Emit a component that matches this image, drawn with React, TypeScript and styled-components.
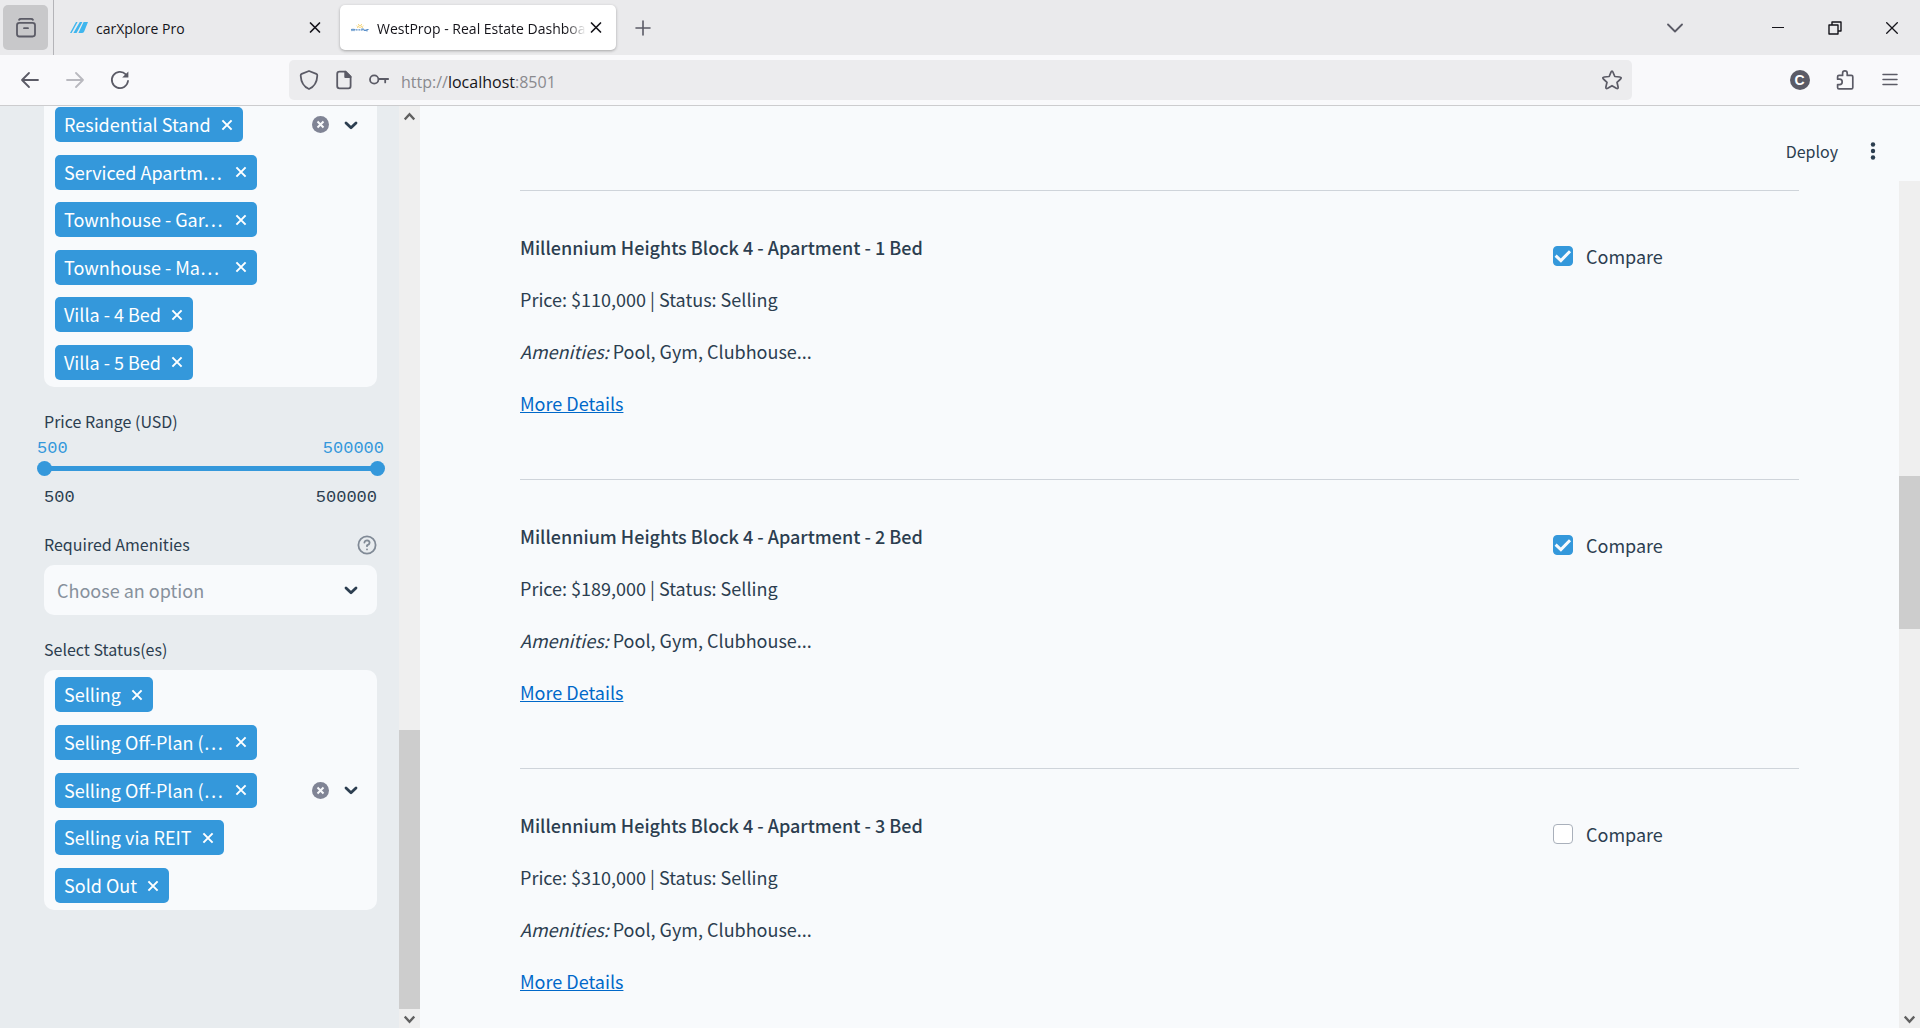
import React, { useState } from "react";
import styled, { createGlobalStyle, css } from "styled-components";

const sans = `"Noto Sans CJK SC", "Noto Sans", sans-serif`;
const chromeSans = `"Open Sans", "Noto Sans", sans-serif`;
const mono = `"Liberation Mono", monospace`;

const c = {
  ink: "#2c3e50",
  blue: "#3498db",
  link: "#0068c9",
  side: "#e8ecef",
  page: "#f8fafc",
  chrome: "#5b5b66",
};

const Global = createGlobalStyle`
  *, *::before, *::after { box-sizing: border-box; }
  body { margin: 0; font-family: ${sans}; color: ${c.ink}; overflow: hidden; }
  button { border: 0; padding: 0; background: none; color: inherit; font: inherit; cursor: pointer; }
  p { margin: 0; }
  svg { display: block; flex: none; }
`;

const Window = styled.div`
  display: flex;
  flex-direction: column;
  height: 100vh;
  background: ${c.page};
`;

/* ---------- browser frame ---------- */

const TabBar = styled.div`
  display: flex;
  align-items: center;
  flex: none;
  height: 55px;
  padding-left: 3px;
  background: #eaeaec;
  color: ${c.chrome};
`;

const IconButton = styled.button<{ $w?: number }>`
  display: flex;
  align-items: center;
  justify-content: center;
  flex: none;
  width: ${(p) => p.$w ?? 45}px;
  height: 45px;
`;

const ViewButton = styled(IconButton)`
  border-radius: 5px;
  background: #c8c8ca;
`;

const TabList = styled.div`
  display: flex;
  gap: 5px;
  align-items: center;
  height: 100%;
  margin-left: 5px;
  padding-left: 5px;
  border-left: 1px solid #b4b4b8;
`;

const Tab = styled.div<{ $active?: boolean }>`
  display: flex;
  align-items: center;
  width: 276px;
  height: 45px;
  padding: 0 10px 0 11px;
  border-radius: 5px;
  color: #15141a;
  ${(p) =>
    p.$active &&
    css`
      background: #fff;
      box-shadow: 0 1px 3px rgba(0, 0, 0, 0.3);
    `}
`;

const TabTitle = styled.span<{ $fade?: boolean }>`
  flex: 1;
  min-width: 0;
  margin-left: 8px;
  padding-top: 2px;
  overflow: hidden;
  white-space: nowrap;
  font: 14px/24px ${chromeSans};
  ${(p) =>
    p.$fade &&
    css`
      mask-image: linear-gradient(to left, transparent, #000 20px);
    `}
`;

const TabClose = styled.button`
  display: flex;
  align-items: center;
  justify-content: center;
  width: 20px;
  height: 30px;
`;

const WindowButtons = styled.div`
  display: flex;
  margin-left: auto;
  color: #15141a;
`;

const ListTabs = styled(IconButton)`
  margin-right: 52px;
  color: ${c.chrome};
`;

const NavBar = styled.div`
  display: flex;
  align-items: center;
  flex: none;
  height: 51px;
  padding: 0 8px 0 7px;
  background: #f9f9fb;
  border-bottom: 1px solid #ccccce;
  color: ${c.chrome};
`;

const AddressBar = styled.div`
  display: flex;
  align-items: center;
  flex: 1;
  height: 40px;
  margin: 0 145px 0 147px;
  padding: 0 3px 0 2px;
  border-radius: 5px;
  background: #ececee;
`;

const AddressIcon = styled.button`
  display: flex;
  align-items: center;
  justify-content: center;
  width: 35px;
  height: 35px;
`;

const Address = styled.div`
  display: flex;
  flex: 1;
  padding: 3px 0 0 5px;
  font: 16px/24px ${chromeSans};
  color: #8a8a8e;
  b {
    font-weight: 400;
    color: #15141a;
  }
`;

const Badge = styled.span`
  width: 20px;
  height: 20px;
  border-radius: 50%;
  background: ${c.chrome};
  color: #fff;
  text-align: center;
  font: 700 14px/20px "Liberation Sans", sans-serif;
`;

const Body = styled.div`
  display: flex;
  flex: 1;
  min-height: 0;
`;

/* ---------- scrollbars ---------- */

const ScrollTrack = styled.div`
  display: flex;
  flex-direction: column;
  justify-content: space-between;
  flex: none;
  width: 21px;
  background: #efefef;
  color: #606060;
`;

const ScrollArrow = styled.button`
  display: flex;
  align-items: center;
  justify-content: center;
  flex: none;
  height: 19px;
  padding-top: 2px;
`;

const ScrollGap = styled.div<{ $grow: number }>`
  flex: ${(p) => p.$grow} 0 0;
`;

const ScrollThumb = styled(ScrollGap)`
  background: #cdcdcd;
`;

/* ---------- sidebar ---------- */

const Sidebar = styled.aside`
  display: flex;
  flex: none;
  width: 420px;
  background: ${c.side};
`;

const Filters = styled.div`
  display: flex;
  flex-direction: column;
  gap: 20px;
  flex: 1;
  min-width: 0;
  padding: 0 22px 0 44px;
`;

const Field = styled.div`
  display: flex;
  flex-direction: column;
`;

const LabelRow = styled.div`
  display: flex;
  align-items: flex-start;
  justify-content: space-between;
  height: 30px;
  font-size: 16px;
  line-height: 28px;
`;

const HelpButton = styled.button`
  display: flex;
  align-items: center;
  height: 30px;
  color: #808a96;
`;

const MultiBox = styled.div<{ $open?: boolean; $height: number }>`
  display: flex;
  justify-content: space-between;
  align-items: ${(p) => (p.$open ? "flex-start" : "center")};
  height: ${(p) => p.$height}px;
  margin-top: ${(p) => (p.$open ? 0 : 5)}px;
  padding: ${(p) => (p.$open ? 1 : 7)}px 18px 7px 11px;
  border-radius: ${(p) => (p.$open ? "0 0 10px 10px" : "10px")};
  background: ${c.page};
`;

const TagList = styled.div`
  display: flex;
  flex-direction: column;
  align-items: flex-start;
  justify-content: space-between;
  height: 100%;
`;

const TagBox = styled.span<{ $full?: boolean }>`
  display: flex;
  align-items: center;
  justify-content: space-between;
  gap: 10px;
  width: ${(p) => (p.$full ? "202px" : "auto")};
  height: 35px;
  padding: 0 10px 0 9px;
  border-radius: 5px;
  background: ${c.blue};
  color: #fff;
  font-size: 18px;
  line-height: 35px;
  white-space: nowrap;
`;

const BoxActions = styled.div`
  display: flex;
  align-items: center;
  gap: 14px;
  height: 35px;
`;

const SelectWrap = styled.div`
  display: grid;
  align-items: center;
  margin-top: 5px;
  > * {
    grid-area: 1 / 1;
  }
  > svg {
    justify-self: end;
    margin-right: 18px;
    pointer-events: none;
  }
`;

const Select = styled.select`
  appearance: none;
  width: 100%;
  height: 50px;
  padding: 0 40px 0 13px;
  border: 0;
  border-radius: 10px;
  background: ${c.page};
  color: #87919c;
  font: 18px/26px ${sans};
`;

const RangeValues = styled.div<{ $active?: boolean }>`
  display: flex;
  justify-content: space-between;
  margin: ${(p) => (p.$active ? "0 -7px" : "9px 0 1px")};
  color: ${(p) => (p.$active ? c.blue : c.ink)};
  font: 17px/23px ${mono};
`;

const RangeWrap = styled.div`
  display: grid;
  align-items: center;
  height: 17px;
  > * {
    grid-area: 1 / 1;
  }
`;

const RangeTrack = styled.div`
  height: 5px;
  background: ${c.blue};
`;

const RangeInput = styled.input`
  appearance: none;
  height: 15px;
  margin: 0 -8px 0 -7px;
  background: transparent;
  pointer-events: none;
  &::-webkit-slider-thumb {
    appearance: none;
    width: 15px;
    height: 15px;
    border-radius: 50%;
    background: ${c.blue};
    pointer-events: auto;
  }
`;

/* ---------- listing ---------- */

const Main = styled.main`
  display: flex;
  flex-direction: column;
  flex: 1;
  min-width: 0;
`;

const Header = styled.header`
  display: flex;
  align-items: center;
  justify-content: flex-end;
  gap: 19px;
  flex: none;
  height: 75px;
  padding: 14px 31px 0 0;
  font-size: 16px;
  line-height: 30px;
`;

const MenuButton = styled.button`
  display: flex;
  align-items: center;
  justify-content: center;
  width: 32px;
  height: 30px;
`;

const Scroller = styled.div`
  display: flex;
  flex: 1;
  min-height: 0;
`;

const List = styled.div`
  flex: 1;
  min-width: 0;
  padding: 9px 100px 0;
  overflow: hidden;
`;

const Listing = styled.article`
  display: grid;
  grid-template-columns: minmax(0, 1fr) 246px;
  align-items: start;
  padding: 40px 0 60px;
  border-top: 1px solid #cfd4da;
  font-size: 18px;
  line-height: 32px;
`;

const Details = styled.div`
  display: flex;
  flex-direction: column;
  align-items: flex-start;
  gap: 20px;
`;

const Title = styled.strong`
  font-weight: 500;
`;

const MoreLink = styled.a`
  color: ${c.link};
  text-decoration: underline;
`;

const Compare = styled.label`
  display: flex;
  align-items: center;
  gap: 13px;
  margin-top: 9px;
`;

const Check = styled.input`
  appearance: none;
  width: 20px;
  height: 20px;
  margin: 0;
  border: 1px solid #a9b0bb;
  border-radius: 4px;
  background: #fff;
  &:checked {
    border-color: ${c.blue};
    background: ${c.blue}
      url("data:image/svg+xml,%3Csvg xmlns='http://www.w3.org/2000/svg' viewBox='0 0 18 18'%3E%3Cpath d='M1.6 8.6 6.9 13.6 16 4.2' fill='none' stroke='%23f8fafc' stroke-width='3'/%3E%3C/svg%3E")
      center / 18px 18px no-repeat;
  }
`;

/* ---------- icons ---------- */

type IconProps = { d: string; size?: number; w?: number; cap?: "round" | "butt" };
const Icon = ({ d, size = 20, w = 2, cap = "round" }: IconProps) => (
  <svg width={size} height={size} viewBox={`0 0 ${size} ${size}`} fill="none" stroke="currentColor" strokeWidth={w} strokeLinecap={cap} strokeLinejoin="round">
    <path d={d} />
  </svg>
);

const CloseIcon = () => <Icon size={20} w={1.7} d="M5.5 5 14.5 14M14.5 5 5.5 14" />;
const Chevron = () => <Icon size={16} w={2.8} d="M3 6 8 10.8 13 6" />;
const ClearIcon = () => (
  <svg width="17" height="17" viewBox="0 0 17 17">
    <circle cx="8.5" cy="8.5" r="8.5" fill="#808495" />
    <path d="M5.5 5.5 11.5 11.5M11.5 5.5 5.5 11.5" stroke="#f8fafc" strokeWidth="2" />
  </svg>
);

const BlueMark = () => (
  <svg width="18" height="12" viewBox="0 0 18 12" fill="#3fb6ee">
    <path d="M6 0h1.6L1.6 11H0zM9.8 0h2.6L6.6 11H3.4zM13.6 0H18l-3.8 9.4q-.7 1.6-2.4 1.6H8.4z" />
  </svg>
);

const SunMark = () => (
  <svg width="18" height="10" viewBox="0 0 18 10" fill="none">
    <path d="M6.5 5q.5-2.5 2.5-2.5T11.5 5M8.3 4.6q.7-1.2 1.4 0M7.4 1l.3.9M10.6 1l-.3.9M5.6 2.8l.8.5M12.4 2.8l-.8.5" stroke="#f5d06c" strokeWidth="1" />
    <path d="M0 6 1 7.6l1-1.4 1 1.4.9-1.6M4.6 6.9h2M7.4 6.9h2M10.8 7.8V6h1.4v1.2M13.4 6.5v1h1.4v-1M16 8.4V6.5h1.6" stroke="#5a8fc8" strokeWidth="1.1" />
  </svg>
);

type ArrowProps = { label: string; up?: boolean };
const Arrow = ({ label, up }: ArrowProps) => (
  <ScrollArrow aria-label={label}>
    <svg width="11" height="9" viewBox="0 0 11 9" fill="none" stroke="currentColor" strokeWidth="2.4">
      <path d={up ? "M.7 7.5 5.5 2.2l4.8 5.3" : "M.7 1.5 5.5 6.8l4.8-5.3"} />
    </svg>
  </ScrollArrow>
);

/* ---------- parts ---------- */

type TagData = { text: string; full?: boolean };

const propertyTypes: TagData[] = [
  { text: "Residential Stand" },
  { text: "Serviced Apartm…", full: true },
  { text: "Townhouse - Gar…", full: true },
  { text: "Townhouse - Ma…", full: true },
  { text: "Villa - 4 Bed" },
  { text: "Villa - 5 Bed" },
];

const statuses: TagData[] = [
  { text: "Selling" },
  { text: "Selling Off-Plan (…", full: true },
  { text: "Selling Off-Plan (…", full: true },
  { text: "Selling via REIT" },
  { text: "Sold Out" },
];

type MultiProps = { tags: TagData[]; height: number; open?: boolean };
const MultiSelect = ({ tags, height, open }: MultiProps) => (
  <MultiBox $height={height} $open={open}>
    <TagList>
      {tags.map((t, i) => (
        <TagBox key={i} $full={t.full}>
          {t.text}
          <button aria-label="Remove">
            <Icon size={12} w={2} cap="butt" d="M1.4 1.4 10.6 10.6M10.6 1.4 1.4 10.6" />
          </button>
        </TagBox>
      ))}
    </TagList>
    <BoxActions>
      <button aria-label="Clear all"><ClearIcon /></button>
      <button aria-label="Open"><Chevron /></button>
    </BoxActions>
  </MultiBox>
);

const units = [
  { beds: 1, price: "$110,000", picked: true },
  { beds: 2, price: "$189,000", picked: true },
  { beds: 3, price: "$310,000", picked: false },
];

export default function App() {
  const [range, setRange] = useState([500, 500000]);
  return (
    <Window>
      <Global />
      <TabBar>
        <ViewButton aria-label="View">
          <Icon w={1.8} d="M3 1.8Q3.4.9 5 .9H15Q16.6.9 17 1.8M3.4 4.9H16.6Q19 4.9 19 7.3V16.1Q19 18.5 16.6 18.5H3.4Q1 18.5 1 16.1V7.3Q1 4.9 3.4 4.9ZM8 10.2H12" />
        </ViewButton>
        <TabList>
          <Tab>
            <BlueMark />
            <TabTitle>carXplore Pro</TabTitle>
            <TabClose aria-label="Close tab"><CloseIcon /></TabClose>
          </Tab>
          <Tab $active>
            <SunMark />
            <TabTitle $fade>WestProp - Real Estate Dashboard</TabTitle>
            <TabClose aria-label="Close tab"><CloseIcon /></TabClose>
          </Tab>
        </TabList>
        <IconButton $w={54} aria-label="New tab">
          <Icon size={16} w={1.6} d="M8 1V15M1 8H15" />
        </IconButton>
        <WindowButtons>
          <ListTabs aria-label="List all tabs">
            <Icon size={16} w={1.8} d="M1 4.5 8 11.5 15 4.5" />
          </ListTabs>
          <IconButton $w={57} aria-label="Minimize"><Icon size={12} w={1} cap="butt" d="M0 5.5H12" /></IconButton>
          <IconButton $w={57} aria-label="Restore">
            <Icon size={14} w={1.4} cap="butt" d="M1 4H10V13H1ZM4 4V1H13V10H10" />
          </IconButton>
          <IconButton $w={57} aria-label="Close"><Icon size={12} w={1.3} cap="butt" d="M.3.3 11.7 11.7M11.7.3.3 11.7" /></IconButton>
        </WindowButtons>
      </TabBar>

      <NavBar>
        <IconButton aria-label="Back"><Icon w={1.8} d="M18 10H2M9 3 2 10 9 17" /></IconButton>
        <IconButton aria-label="Forward" disabled style={{ opacity: 0.4 }}>
          <Icon w={1.8} d="M2 10H18M11 3 18 10 11 17" />
        </IconButton>
        <IconButton aria-label="Reload">
          <svg width="20" height="20" viewBox="0 0 20 20" fill="none" stroke="currentColor" strokeWidth="1.8" strokeLinecap="round">
            <path d="M18 11A8.1 8.1 0 1 1 15.8 4.4" />
            <path d="M18.4 1.4V7.6H12.2Z" fill="currentColor" stroke="none" />
          </svg>
        </IconButton>
        <AddressBar>
          <AddressIcon aria-label="Tracking protection">
            <Icon w={1.8} d="M10 1 17.3 3.9Q18.4 4.4 18.3 5.7 17.8 15.6 10 19 2.2 15.6 1.7 5.7 1.6 4.4 2.7 3.9Z" />
          </AddressIcon>
          <AddressIcon aria-label="Site information">
            <svg width="16" height="20" viewBox="0 0 16 20" fill="none" stroke="currentColor" strokeWidth="1.8" strokeLinejoin="round">
              <path d="M3.5 1.7H9.6L14.6 6.7V16Q14.6 18.3 12.5 18.3H3.5Q1.2 18.3 1.2 16V4Q1.2 1.7 3.5 1.7Z" />
              <path d="M9.2 1.7V7H14.6Z" fill="currentColor" />
            </svg>
          </AddressIcon>
          <AddressIcon aria-label="Saved login">
            <Icon w={1.8} d="M9.4 9.5A4.2 4.2 0 1 1 1 9.5 4.2 4.2 0 1 1 9.4 9.5ZM9.6 9H19.2M16.2 9V12.4" />
          </AddressIcon>
          <Address>http://<b>localhost</b>:8501</Address>
          <AddressIcon aria-label="Bookmark">
            <Icon w={1.7} d="M10 1.2Q10.6 1.2 11 2.2L12.8 6.5 17.7 7Q20 7.4 18.6 9L15 12.3 16.1 17Q16.4 19.2 14.3 18.3L10 15.7 5.7 18.3Q3.6 19.2 3.9 17L5 12.3 1.4 9Q0 7.4 2.3 7L7.2 6.5 9 2.2Q9.4 1.2 10 1.2Z" />
          </AddressIcon>
        </AddressBar>
        <IconButton aria-label="Account"><Badge>C</Badge></IconButton>
        <IconButton aria-label="Extensions">
          <Icon w={1.7} d="M2.6 9.2V6.8Q2.6 5.4 4 5.4H7.6V3.2A2.3 2.3 0 0 1 12.2 3.2V5.4H16.4Q17.8 5.4 17.8 6.8V17.4Q17.8 18.8 16.4 18.8H4Q2.6 18.8 2.6 17.4V14.6H4.6Q7.2 14.4 7.2 11.9 7.2 9.4 4.6 9.2Z" />
        </IconButton>
        <IconButton aria-label="Menu"><Icon size={16} w={1.5} d="M1 2.5H15M1 7.5H15M1 12.5H15" /></IconButton>
      </NavBar>

      <Body>
        <Sidebar>
          <Filters>
            <MultiSelect tags={propertyTypes} height={281} open />
            <Field>
              <LabelRow>Price Range (USD)</LabelRow>
              <RangeValues $active><span>{range[0]}</span><span>{range[1]}</span></RangeValues>
              <RangeWrap>
                <RangeTrack />
                {range.map((v, i) => (
                  <RangeInput
                    key={i}
                    type="range"
                    aria-label={i ? "Maximum price" : "Minimum price"}
                    min={500}
                    max={500000}
                    value={v}
                    onChange={(e) => setRange(range.map((r, j) => (j === i ? Number(e.target.value) : r)))}
                  />
                ))}
              </RangeWrap>
              <RangeValues><span>500</span><span>500000</span></RangeValues>
            </Field>
            <Field>
              <LabelRow>
                <label htmlFor="amenities">Required Amenities</label>
                <HelpButton aria-label="Help">
                  <Icon w={1.8} d="M18.6 10A8.6 8.6 0 1 1 1.4 10 8.6 8.6 0 1 1 18.6 10ZM7.4 7.6Q7.8 5.4 10.1 5.4 12.6 5.6 12.6 7.8 12.4 9.4 10 10.4V11.2M10 14.3V14.4" />
                </HelpButton>
              </LabelRow>
              <SelectWrap>
                <Select id="amenities"><option>Choose an option</option></Select>
                <Chevron />
              </SelectWrap>
            </Field>
            <Field>
              <LabelRow>Select Status(es)</LabelRow>
              <MultiSelect tags={statuses} height={240} />
            </Field>
          </Filters>
          <ScrollTrack>
            <Arrow up label="Scroll up" />
            <ScrollGap $grow={605} />
            <ScrollThumb $grow={279} />
            <Arrow label="Scroll down" />
          </ScrollTrack>
        </Sidebar>

        <Main>
          <Header>
            <button>Deploy</button>
            <MenuButton aria-label="Main menu">
              <svg width="6" height="18" viewBox="0 0 6 18" fill="currentColor">
                <circle cx="3" cy="2.5" r="2.2" /><circle cx="3" cy="9" r="2.2" /><circle cx="3" cy="15.5" r="2.2" />
              </svg>
            </MenuButton>
          </Header>
          <Scroller>
            <List>
              {units.map((u) => (
                <Listing key={u.beds}>
                  <Details>
                    <Title>Millennium Heights Block 4 - Apartment - {u.beds} Bed</Title>
                    <p>Price: {u.price} | Status: Selling</p>
                    <p><em>Amenities:</em> Pool, Gym, Clubhouse...</p>
                    <MoreLink href="#details">More Details</MoreLink>
                  </Details>
                  <Compare>
                    <Check type="checkbox" defaultChecked={u.picked} />
                    Compare
                  </Compare>
                </Listing>
              ))}
            </List>
            <ScrollTrack>
              <ScrollGap $grow={295} />
              <ScrollThumb $grow={153} />
              <ScrollGap $grow={380} />
              <Arrow label="Scroll down" />
            </ScrollTrack>
          </Scroller>
        </Main>
      </Body>
    </Window>
  );
}
